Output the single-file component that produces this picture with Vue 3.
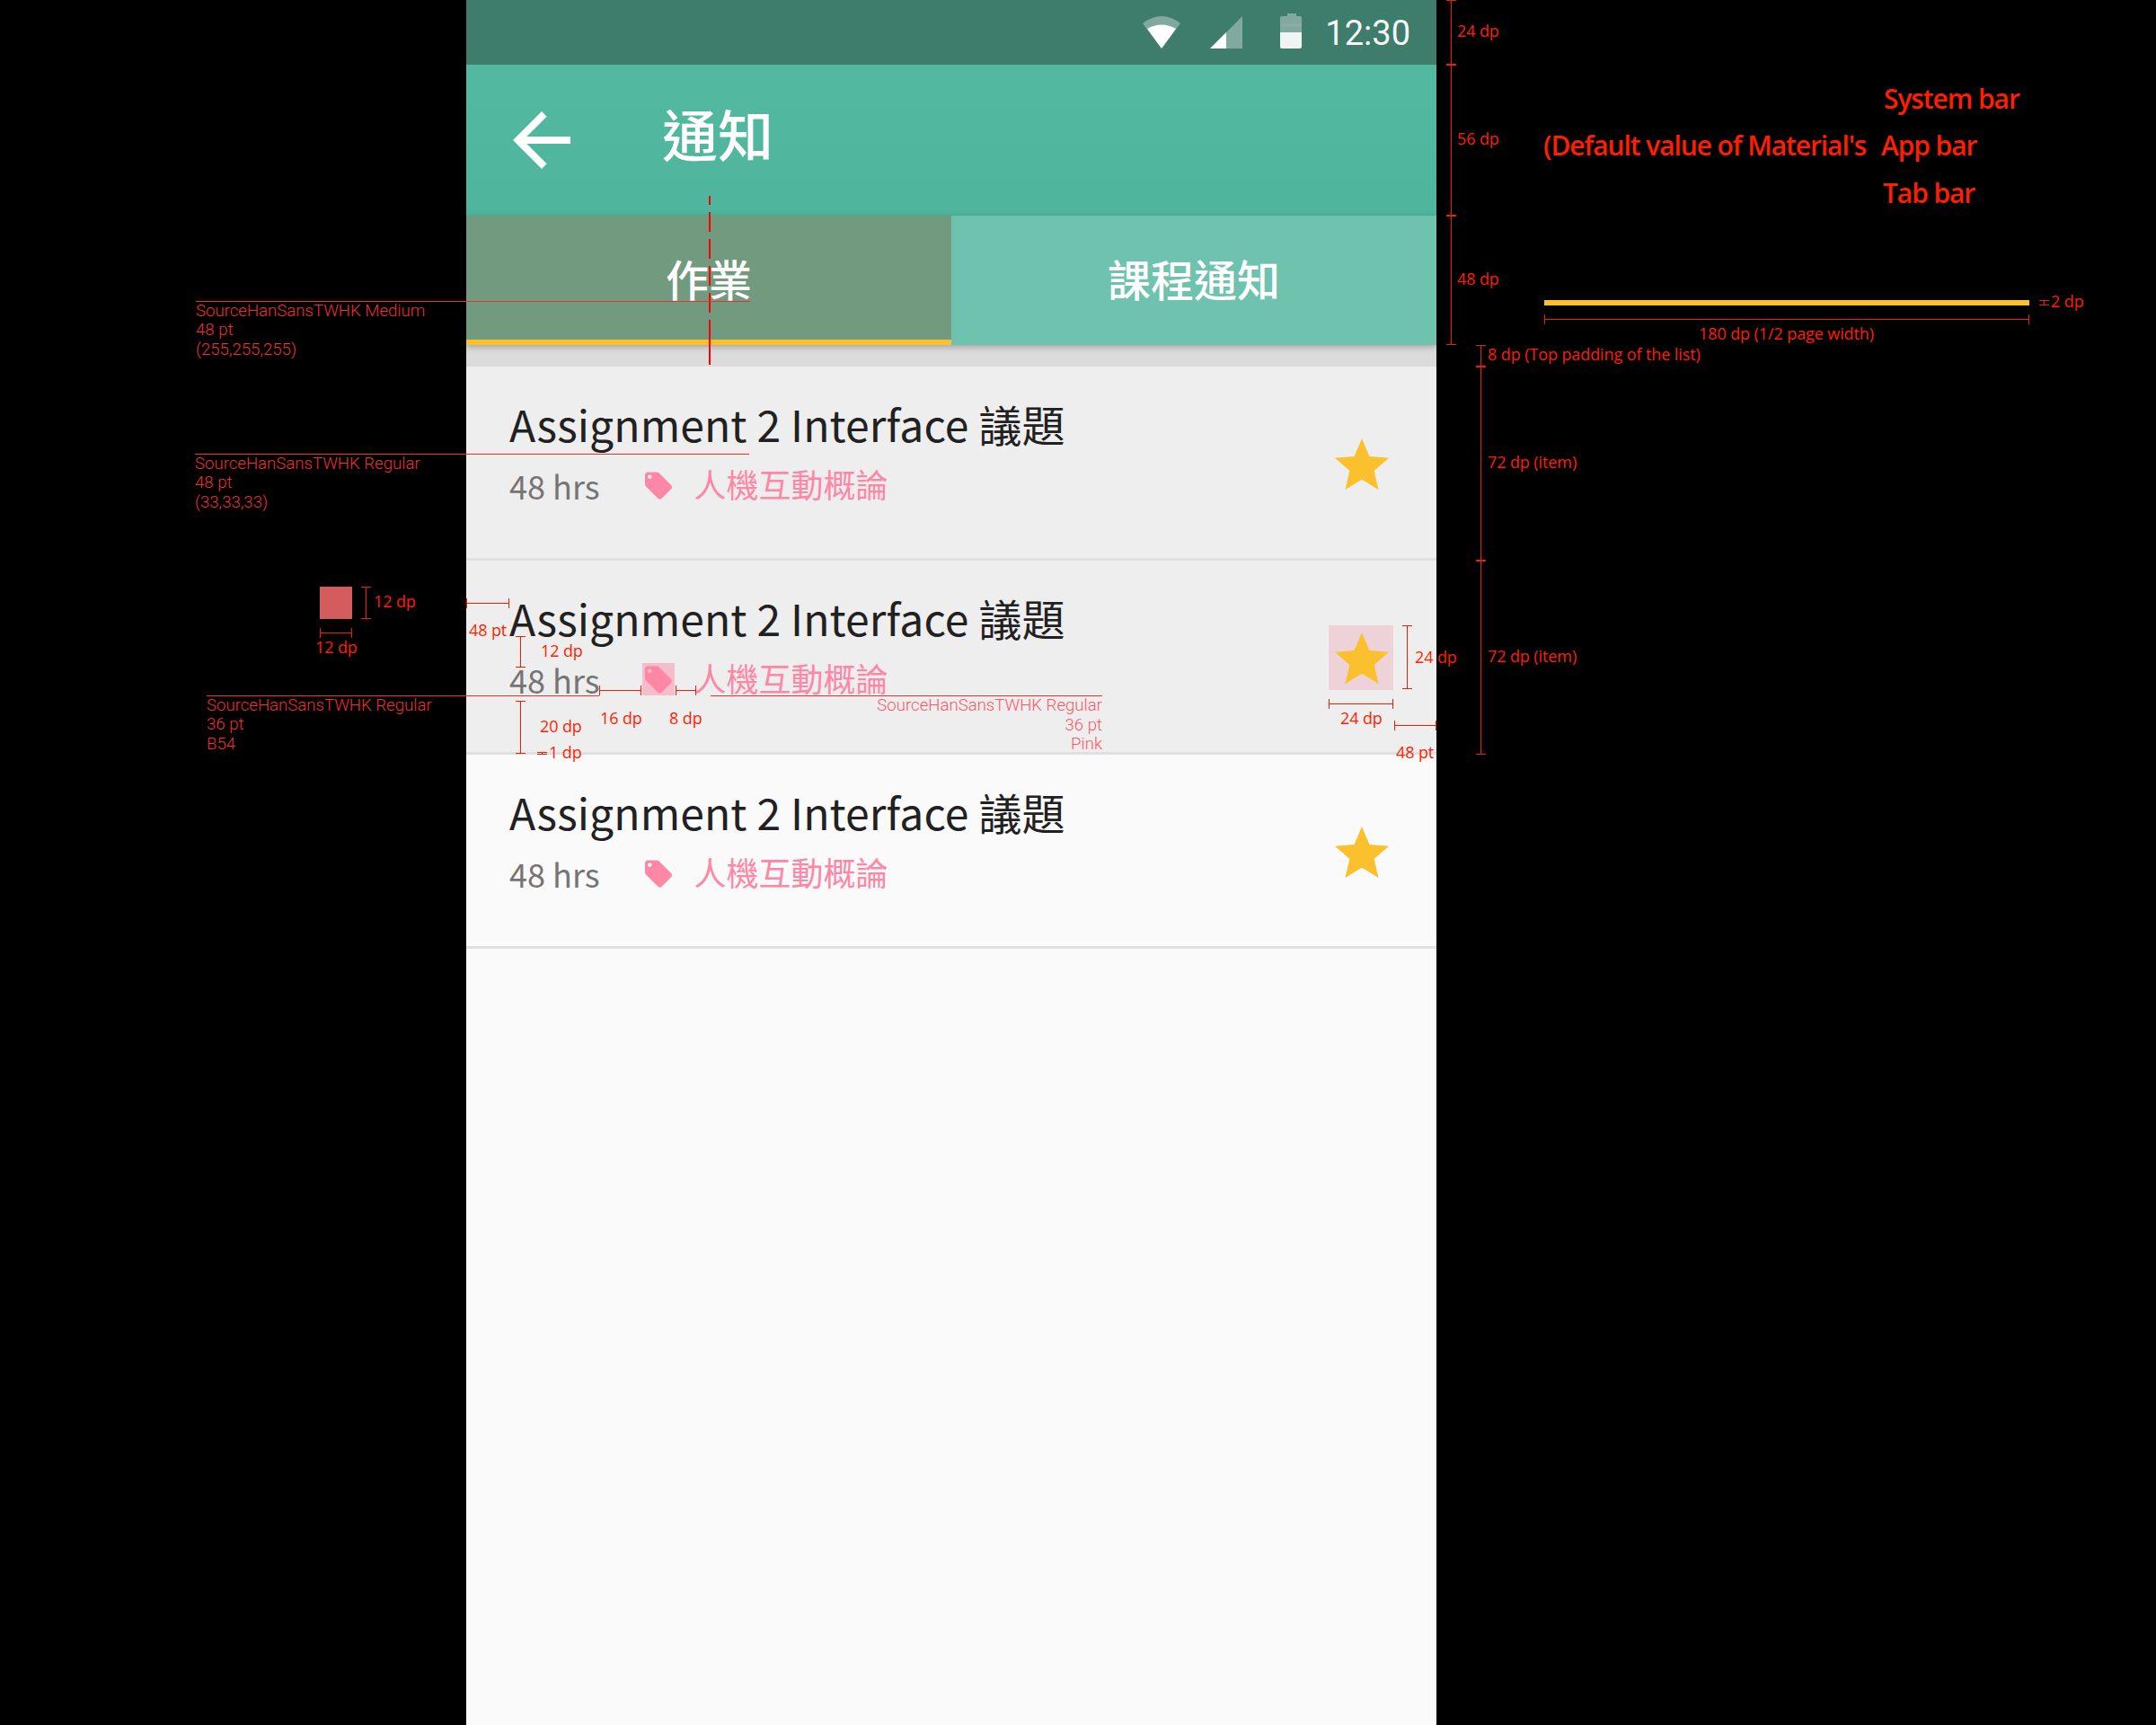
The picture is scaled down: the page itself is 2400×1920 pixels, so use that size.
<template>
  <div class="canvas">
    <div class="phone">
      <div class="status-bar">
        <svg class="status-icon wifi" viewBox="0 0 42 36">
          <path d="M0 8Q21 -8 42 8L21 36z" fill="#fff" opacity="0.35" />
          <path d="M5 14Q21 5 37 14L21 36z" fill="#fff" />
        </svg>
        <svg class="status-icon signal" viewBox="0 0 36 36">
          <path d="M0 36L36 0V36z" fill="#fff" opacity="0.35" />
          <path d="M0 36L18 18V36z" fill="#fff" />
        </svg>
        <svg class="status-icon battery" viewBox="0 0 24 39">
          <path d="M8 0h10v3h4q2 0 2 2v16H0V5q0-2 2-2h6z" fill="#fff" opacity="0.35" />
          <path d="M0 12h24v2H0z" fill="#fff" opacity="0.08" />
          <path d="M0 21h24v16q0 2-2 2H2q-2 0-2-2z" fill="#fff" opacity="0.92" />
        </svg>
        <span class="clock">12:30</span>
      </div>

      <div class="app-bar">
        <svg class="back" viewBox="0 0 24 24">
          <path d="M20 11H7.83l5.59-5.59L12 4l-8 8 8 8 1.41-1.41L7.83 13H20v-2z" fill="#fff" />
        </svg>
        <span class="app-title">通知</span>
      </div>

      <div class="tabs">
        <div class="tab tab--active">作業</div>
        <div class="tab">課程通知</div>
      </div>

      <div class="list">
        <div v-for="(item, i) in items" :key="i" class="item" :class="{ 'item--plain': i === 2 }">
          <div class="item__text">
            <div class="item__title">{{ item.title }}</div>
            <div class="item__sub">
              <span class="item__due">{{ item.due }}</span>
              <span class="item__tag" :class="{ 'is-marked': i === 1 }">
                <svg viewBox="0 -0.4 24 24">
                  <path
                    d="M21.41 11.58l-9-9C12.05 2.22 11.55 2 11 2H4c-1.1 0-2 .9-2 2v7c0 .55.22 1.05.59 1.42l9 9c.36.36.86.58 1.41.58.55 0 1.05-.22 1.41-.59l7-7c.37-.36.59-.86.59-1.41 0-.55-.23-1.06-.59-1.42zM5.5 7C4.67 7 4 6.33 4 5.5S4.67 4 5.5 4 7 4.67 7 5.5 6.33 7 5.5 7z"
                    fill="#ff87a6"
                  />
                </svg>
              </span>
              <span class="item__course">{{ item.course }}</span>
            </div>
          </div>
          <div class="item__star" :class="{ 'is-marked': i === 1 }">
            <svg viewBox="-0.33 -0.67 24 24">
              <path d="M12 17.27L18.18 21l-1.64-7.03L22 9.24l-7.19-.61L12 2 9.19 8.63 2 9.24l5.46 4.73L5.82 21z" fill="#fbc02d" />
            </svg>
          </div>
        </div>
      </div>
    </div>

    <!-- redline annotations, placed on the free canvas -->
    <div class="dash"></div>
    <div class="swatch"></div>
    <div class="sample-bar"></div>

    <div
      v-for="(l, i) in rules"
      :key="'r' + i"
      class="rule"
      :style="{ left: l[0] + 'px', top: l[2] + 'px', width: l[1] - l[0] + 'px' }"
    ></div>
    <div
      v-for="(d, i) in hDims"
      :key="'h' + i"
      class="dim-h"
      :style="{ left: d[0] + 'px', top: d[2] + 'px', width: d[1] - d[0] + 'px' }"
    ></div>
    <div
      v-for="(d, i) in vDims"
      :key="'v' + i"
      class="dim-v"
      :style="{ left: d[0] + 'px', top: d[1] + 'px', height: d[2] - d[1] + 'px' }"
    ></div>

    <div
      v-for="(n, i) in specs"
      :key="'s' + i"
      class="spec"
      :class="{ 'spec--pink': n.pink }"
      :style="n.right ? { right: 2400 - n.x + 'px', top: n.y + 'px' } : { left: n.x + 'px', top: n.y + 'px' }"
    >{{ n.text }}</div>
    <div
      v-for="(n, i) in labels"
      :key="'l' + i"
      class="label"
      :style="{ left: n.x + 'px', top: n.y + 'px' }"
    >{{ n.text }}</div>
    <div
      v-for="(n, i) in bigLabels"
      :key="'b' + i"
      class="big-label"
      :style="{ left: n.x + 'px', top: n.y + 'px' }"
    >{{ n.text }}</div>
  </div>
</template>

<script setup>
const entry = {
  title: "Assignment 2 Interface 議題",
  due: "48 hrs",
  course: "人機互動概論",
};
const items = [entry, entry, entry];

// [x1, x2, y]
const rules = [
  [218, 835, 335],
  [217, 834, 505],
  [230, 667, 774],
  [791, 1227, 774],
];
const hDims = [
  [1719, 2259, 355],
  [356, 392, 704],
  [519, 567, 671],
  [667, 714, 768],
  [752, 775, 768],
  [1479, 1551, 783],
  [1552, 1599, 807],
];
// [x, y1, y2]
const vDims = [
  [1615, 0, 72],
  [1615, 72, 240],
  [1615, 240, 384],
  [1648, 384, 408],
  [1648, 408, 624],
  [1648, 624, 840],
  [2275, 334, 340],
  [407, 653, 689],
  [579, 708, 743],
  [579, 780, 839],
  [603, 837, 840],
  [1566, 696, 767],
];

const specs = [
  { x: 218, y: 335, text: "SourceHanSansTWHK Medium" },
  { x: 218, y: 356, text: "48 pt" },
  { x: 218, y: 378, text: "(255,255,255)" },
  { x: 217, y: 505, text: "SourceHanSansTWHK Regular" },
  { x: 217, y: 526, text: "48 pt" },
  { x: 217, y: 548, text: "(33,33,33)" },
  { x: 230, y: 774, text: "SourceHanSansTWHK Regular" },
  { x: 230, y: 795, text: "36 pt" },
  { x: 230, y: 817, text: "B54" },
  { x: 1227, y: 774, text: "SourceHanSansTWHK Regular", pink: true, right: true },
  { x: 1227, y: 796, text: "36 pt", pink: true, right: true },
  { x: 1227, y: 817, text: "Pink", pink: true, right: true },
];
const labels = [
  { x: 1622, y: 22, text: "24 dp" },
  { x: 1622, y: 142, text: "56 dp" },
  { x: 1622, y: 298, text: "48 dp" },
  { x: 1656, y: 382, text: "8 dp (Top padding of the list)" },
  { x: 1656, y: 502, text: "72 dp (item)" },
  { x: 1656, y: 718, text: "72 dp (item)" },
  { x: 1891, y: 359, text: "180 dp (1/2 page width)" },
  { x: 2283, y: 323, text: "2 dp" },
  { x: 416, y: 657, text: "12 dp" },
  { x: 351, y: 708, text: "12 dp" },
  { x: 522, y: 689, text: "48 pt" },
  { x: 602, y: 712, text: "12 dp" },
  { x: 601, y: 796, text: "20 dp" },
  { x: 611, y: 825, text: "1 dp" },
  { x: 668, y: 787, text: "16 dp" },
  { x: 745, y: 787, text: "8 dp" },
  { x: 1575, y: 719, text: "24 dp" },
  { x: 1492, y: 787, text: "24 dp" },
  { x: 1554, y: 825, text: "48 pt" },
];
const bigLabels = [
  { x: 2097, y: 90, text: "System bar" },
  { x: 1718, y: 142, text: "(Default value of Material's" },
  { x: 2094, y: 142, text: "App bar" },
  { x: 2096, y: 195, text: "Tab bar" },
];
</script>

<style>
body {
  background: #000;
}
</style>

<style scoped>
.canvas {
  position: relative;
  width: 2400px;
  height: 1920px;
  overflow: hidden;
  background: #000;
  font-family: "Noto Sans CJK TC", "Noto Sans", sans-serif;
}

.phone {
  display: flex;
  flex-direction: column;
  width: 1080px;
  height: 1920px;
  margin-left: 519px;
  background: #fafafa;
}

.status-bar {
  display: flex;
  align-items: flex-start;
  justify-content: flex-end;
  height: 72px;
  padding-right: 29px;
  background: #3e7c6c;
}

.status-icon {
  display: block;
}

.wifi {
  width: 42px;
  height: 36px;
  margin-top: 18px;
}

.signal {
  width: 36px;
  height: 36px;
  margin: 18px 0 0 33px;
}

.battery {
  width: 24px;
  height: 39px;
  margin: 15px 0 0 42px;
}

.clock {
  margin-left: 26px;
  font-family: Roboto, sans-serif;
  font-size: 38px;
  line-height: 74px;
  color: #f4f7f6;
}

.app-bar {
  display: flex;
  align-items: center;
  height: 168px;
  padding-left: 36px;
  background: linear-gradient(#52b9a0, #4fb69d);
}

.back {
  width: 96px;
  height: 96px;
}

.app-title {
  margin: -16px 0 0 86px;
  font-size: 62px;
  font-weight: 500;
  color: #fff;
}

.tabs {
  position: relative;
  display: flex;
  height: 144px;
  box-shadow: 0 2px 7px rgba(0, 0, 0, 0.28);
}

.tab {
  flex: 1;
  height: 138px;
  border-bottom: 6px solid transparent;
  font-size: 48px;
  font-weight: 500;
  line-height: 138px;
  text-align: center;
  color: #fff;
  background: #6fc2ae;
}

.tab--active {
  background: #729a7e;
  border-bottom-color: #fbc02d;
}

.list {
  padding-top: 24px;
  background: linear-gradient(#dbdbdb 24px, transparent 24px);
}

.item {
  box-sizing: border-box;
  display: flex;
  height: 216px;
  padding: 0 48px;
  background: #eee;
  border-bottom: 3px solid #e0e0e0;
}

.item--plain {
  background: #fafafa;
}

.item__text {
  flex: 1;
  padding-top: 33px;
}

.item__title {
  font-size: 48px;
  line-height: 60px;
  letter-spacing: 0.12px;
  color: #212121;
}

.item__sub {
  display: flex;
  align-items: center;
  height: 48px;
  margin-top: 15px;
}

.item__due {
  font-size: 36px;
  line-height: 48px;
  color: #757575;
}

.item__tag {
  width: 36px;
  height: 36px;
  margin-left: 47px;
}

.item__tag svg {
  display: block;
  width: 36px;
  height: 36px;
}

.item__tag.is-marked {
  background: #f5bdcc;
}

.item__course {
  margin: -5px 0 0 22px;
  font-size: 36px;
  line-height: 48px;
  color: #ff87a6;
}

.item__star {
  width: 72px;
  height: 72px;
  margin-top: 72px;
}

.item__star svg {
  display: block;
  width: 72px;
  height: 72px;
}

.item__star.is-marked {
  background: #edd3d7;
}

.dash {
  position: absolute;
  left: 789px;
  top: 218px;
  width: 2px;
  height: 188px;
  background:
    linear-gradient(#f00, #f00) left bottom / 2px 50px no-repeat,
    linear-gradient(#f00 22px, transparent 22px) left 18px / 2px 30px repeat-y;
}

.swatch {
  position: absolute;
  left: 356px;
  top: 653px;
  width: 36px;
  height: 36px;
  background: #d45c5c;
}

.sample-bar {
  position: absolute;
  left: 1719px;
  top: 334px;
  width: 540px;
  height: 6px;
  background: #fbc02d;
}

.rule {
  position: absolute;
  height: 1px;
  background: #ee3030;
}

.dim-h,
.dim-v {
  position: absolute;
  background: #f01e00;
}

.dim-h {
  height: 1px;
}

.dim-v {
  width: 1px;
}

.dim-h::before,
.dim-h::after {
  content: "";
  position: absolute;
  top: -5px;
  width: 1px;
  height: 11px;
  background: #f01e00;
}

.dim-h::before {
  left: 0;
}

.dim-h::after {
  right: 0;
}

.dim-v::before,
.dim-v::after {
  content: "";
  position: absolute;
  left: -5px;
  width: 11px;
  height: 1px;
  background: #f01e00;
}

.dim-v::before {
  top: 0;
}

.dim-v::after {
  bottom: 0;
}

.spec {
  position: absolute;
  font-family: Roboto, sans-serif;
  font-size: 18.6px;
  font-weight: 300;
  line-height: 22px;
  white-space: nowrap;
  color: #ee3030;
}

.spec--pink {
  color: #ff5566;
}

.label {
  position: absolute;
  font-family: "Open Sans", sans-serif;
  font-size: 18px;
  line-height: 24px;
  letter-spacing: -0.1px;
  white-space: nowrap;
  color: #ff1e00;
}

.big-label {
  position: absolute;
  font-family: "Open Sans", sans-serif;
  font-size: 30px;
  font-weight: 600;
  line-height: 40px;
  letter-spacing: -1.1px;
  white-space: nowrap;
  color: #ff1e00;
}
</style>
